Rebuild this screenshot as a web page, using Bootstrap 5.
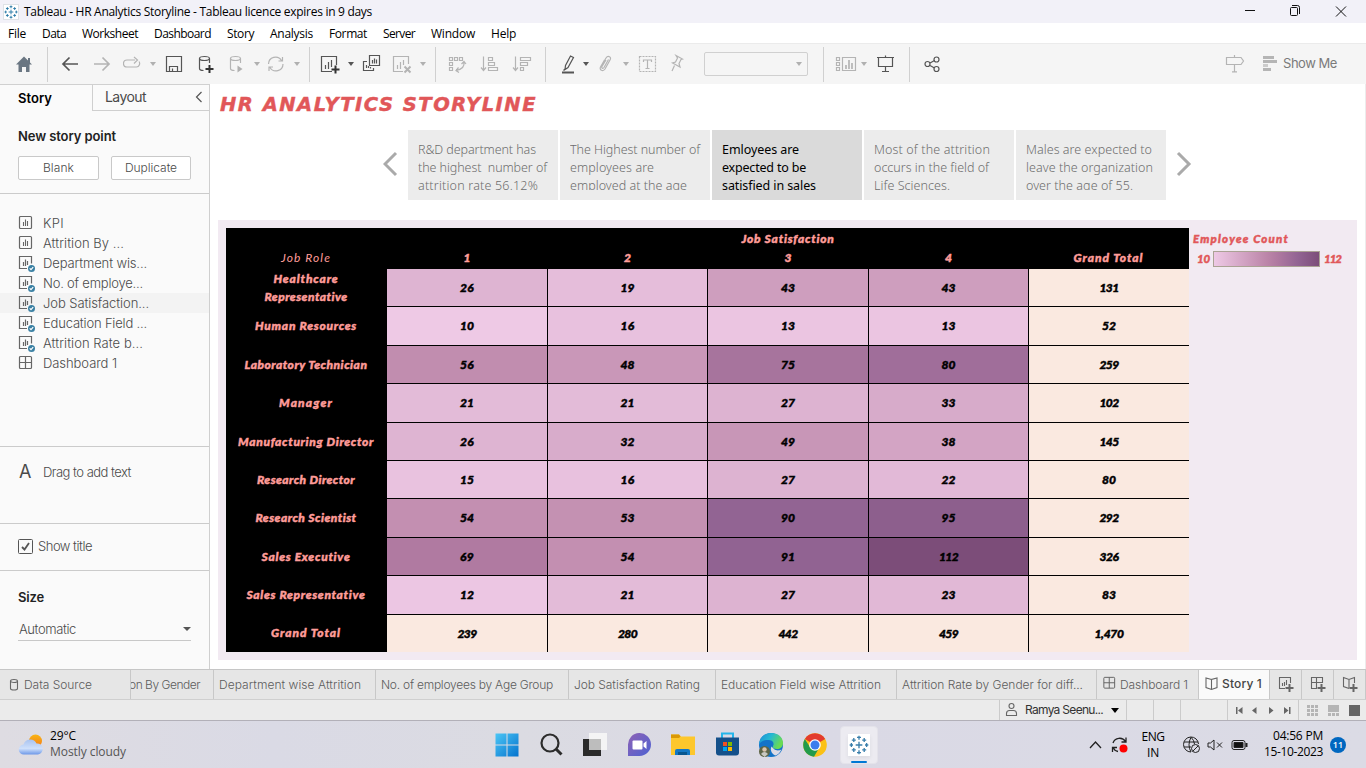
<!DOCTYPE html>
<html lang="en">
<head>
<meta charset="utf-8">
<title>Tableau - HR Analytics Storyline</title>
<link href="https://cdn.jsdelivr.net/npm/bootstrap@5.3.0/dist/css/bootstrap.min.css" rel="stylesheet">
<style>
  body{width:1366px;height:768px;overflow:hidden;font:13px/18px "Inter","Liberation Sans",sans-serif;font-weight:300;color:#4a4a4a;background:#fff}
  svg{display:block;flex:none}
  .segoe{font-family:"Open Sans","Noto Sans",sans-serif;font-weight:400;font-size:12px;color:#000}
  [data-w]{display:inline-block;white-space:pre}
  .titlebar{height:23px;background:#f2f1f8}
  .menubar{height:20px;padding:1px 0 0 8px;gap:16px;background:#fff}
  .menubar span{line-height:20px}
  .toolbar{height:41px;padding-left:15px;background:#f5f5f5;border-top:1px solid #ebebeb;display:grid;align-items:center;
    grid-template-columns:32px 14px 32px 30px 27px 15px 32px 31px 26px 12px 28px 15px 11px 28px 14px 30px 28px 15px 13px 32px 32px 33px 16px 22px 15px 25px 15px 31px 35px 119px 12px 26px 15px 33px 15px 301px 37px auto}
  .toolbar svg,.strk{fill:none;stroke:#b4b4b4;stroke-width:1.2}
  .toolbar svg.on{stroke:#555}
  .vline{width:1px;height:35px;background:#d0d0d0}
  .caret{width:0;border:3px solid transparent;border-top:4px solid #b0b0b0;border-bottom:0}
  .caret.on{border-top-color:#555}
  .pick{width:104px;height:24px;border:1px solid #d0d0d0;border-radius:2px;padding-right:5px}
  .showme{font-size:13px;font-weight:400;color:#7a7a7a;padding-bottom:3px}
  .side{width:210px;background:#fafafa;border-right:1px solid #cfcfcf;border-top:1px solid #d0d0d0}
  .side .sect{border-bottom:1px solid #cbcbcb;padding-left:18px}
  .laytab{width:117px;height:26px;border-left:1px solid #cfcfcf;border-bottom:1px solid #cfcfcf;padding:0 6px 1px 12px;font-size:14px;font-weight:400}
  .hd{font-weight:600;color:#222;font-size:13px}
  .sbtn{height:24px;border:1px solid #c9c9c9;border-radius:2px;background:#fff;line-height:21px;font-size:12px}
  .srow{height:20px;padding-left:18px;gap:8px}
  .srow.hot{background:#f3f3f3}
  .stitle{height:46px;padding:8px 0 0 10px;line-height:25px;font-family:"DejaVu Sans",sans-serif;font-weight:700;font-style:italic;font-size:19.500px;color:#e15759}
  .script{font-family:"Lato","Open Sans",sans-serif;font-style:italic;font-weight:900}
  .bold{-webkit-text-stroke:.45px currentColor}
  .canvas{border-right:1px solid #ececec}
  .points{height:70px;padding-left:173px;gap:2px}
  .point{width:150px;height:70px;background:#ececec;padding:11px 0 0 10px;color:#6c6c6c;font-family:"Noto Sans","Open Sans",sans-serif;font-size:12.500px;font-weight:300}
  .point>div{height:49px;overflow:hidden}
  .point.cur{background:#dadada;color:#000;font-weight:400}
  .dash{margin:20px 8px 0 8px;height:440px;background:#f2eaf2;padding:8px}
  .heat{display:grid;background:#000;width:963px;color:#ff9d9a;font-size:12px;
    grid-template-columns:161px 161px 160px 161px 160px 160px;
    grid-template-rows:20px 21px 38px 39px 38px 39px 38px 38px 39px 38px 39px 37px}
  .heat>div{display:flex;align-items:center;justify-content:center;text-align:center;padding:0 1px 1px 0}
  .heat .val{color:#000;border-right:1px solid #000;border-bottom:1px solid #000;padding:0}
  .heat .val.end{border-right:0}.heat .val.bot{border-bottom:0}
  .total{background:#fae9e0}
  .heat .span5{grid-column:2/7;padding:1px 0 0}
  .legend{color:#e15759;font-size:11.500px;padding:2px 0 0 4px}
  .ramp{width:107px;height:16px;border:1px solid #aaa294;margin:0 4px 0 3px;background:linear-gradient(90deg,#eec9e5,#bc86a9 50%,#b07aa1 60%,#926493 80%,#7c4d79)}
  .sheets{height:31px;border-top:1px solid #c6c6c6;border-bottom:1px solid #cfcfcf;background:#e6e6e6;color:#5c5c5c;font-size:12px;
    display:grid;grid-template-columns:131px 83px 162px 193px 147px 181px 200px 102px 71px 32px 32px 32px}
  .sheets>div{border-right:1px solid #c8c8c8;display:flex;align-items:center;padding-left:5px;overflow:hidden;white-space:nowrap}
  .sheets svg,.status svg{stroke:#666;fill:none;stroke-width:1.1}
  .status{height:21px;background:#ebebeb;border-bottom:1px solid #b2b0b8;padding-left:999px;display:grid;grid-template-columns:127px 27px 27px 47px 71px 67px}
  .status>div{border-left:1px solid #cbcbcb;display:flex;align-items:center}
  .taskbar{height:47px;background:linear-gradient(90deg,#dedce2,#dadae5 20%,#dbdbe2 38%,#dad9e5 60%,#dbdbe5)}
  .tbi{width:44px;height:47px}
  .active-app{width:38px;height:38px;border-radius:4px;background:#ecebf1;border:1px solid #e4e3ea}
  .badge11{width:16px;height:16px;border-radius:50%;background:#0067c0;color:#fff;font:600 9px/16px "Open Sans",sans-serif}
</style>
</head>
<body class="d-flex flex-column">
<svg width="0" height="0" class="position-absolute">
  <symbol id="tab" viewBox="0 0 15 15"><path d="M7.500 5v5M5 7.500h5M3.600 2.300v3M2.100 3.800h3M11.400 2.300v3M9.900 3.800h3M3.600 9.700v3M2.100 11.200h3M11.400 9.700v3M9.900 11.200h3M7.500.500v3M6 1.800h3M7.500 11.500v3M6 13.200h3M1.800 6v3M.500 7.500h2.500M13.200 6v3M12 7.500h2.500" stroke-width="1" fill="none"/></symbol>
  <symbol id="sheet" viewBox="0 0 17 17"><rect x="1.500" y="1.500" width="12" height="12" rx="1"/><path d="M5.500 7v4M7.500 4.500v6.500M9.500 6v5" stroke-width="1.100"/></symbol>
  <symbol id="done" viewBox="0 0 17 17"><path d="M9 13.500H1.500v-12h12v7"/><path d="M5.500 7v4M7.500 4.500v6.500M9.500 6v4"/><circle cx="13.500" cy="13.500" r="3.500" fill="#3a80a3" stroke="none"/><path d="M11.700 13.400l1.300 1.300 2.200-2.500" stroke="#fff"/></symbol>
  <symbol id="grid4" viewBox="0 0 17 17"><rect x="1.500" y="1.500" width="12" height="12" rx="1"/><path d="M7.500 1.500v12M1.500 7.500h12"/></symbol>
  <symbol id="book" viewBox="0 0 17 17"><path d="M7.500 3.500L2 2v9.500l5.500 2 5.500-2V2l-5.500 1.500v10"/></symbol>
</svg>

<header class="titlebar d-flex align-items-center segoe">
  <svg width="16" height="16" class="bg-white border" style="margin-left:3px;stroke:#2878a6"><use href="#tab"/></svg>
  <span style="margin-left:5px" data-w="348">Tableau - HR Analytics Storyline - Tableau licence expires in 9 days</span>
  <svg class="ms-auto" width="122" height="18" fill="none" stroke="#111" style="margin-top:-2px"><path d="M1 8.500h10"/><rect x="46.500" y="5.500" width="7" height="8" rx="1"/><path d="M48 3.500h5.500q2 0 2 2V12M92 4.500l10 10M102 4.500l-10 10"/></svg>
</header>
<nav class="menubar segoe d-flex">
  <span data-w="18">File</span><span data-w="24">Data</span><span data-w="56">Worksheet</span><span data-w="57">Dashboard</span><span data-w="27">Story</span><span data-w="43">Analysis</span><span data-w="38">Format</span><span data-w="32">Server</span><span data-w="44">Window</span><span data-w="25">Help</span>
</nav>

<div class="toolbar">
  <svg width="18" height="20"><path d="M9 2.500L1 10.500h2.500V18H7v-5h4v5h3.500v-7.500H17L15 8.500V4h-2v2.500z" fill="#6a7682" stroke="none"/></svg>
  <i class="vline"></i>
  <svg class="on" width="18" height="20"><path d="M17 10H2M8.500 3.500L2 10l6.500 6.500" stroke-width="1.700"/></svg>
  <svg width="18" height="20"><path d="M1 10h15M9.500 3.500L16 10l-6.500 6.500" stroke-width="1.700"/></svg>
  <svg width="19" height="20"><path d="M12 6H4a3.500 3.500 0 0 0 0 7h9.500a3.500 3.500 0 0 0 2.500-5.500M11 3l3.500 3L11 9.500"/></svg>
  <i class="caret"></i>
  <svg class="on" width="18" height="20"><path d="M1.500 2.500h15v15h-15zM4.500 17v-4.500h8V17M7.500 17v-2.500"/></svg>
  <svg class="on" width="18" height="20"><ellipse cx="7.500" cy="4.500" rx="5" ry="2"/><path d="M2.500 4.500v10q0 2 4 2M12.500 4.500V9"/><path d="M12.500 11v8M8.500 15h8" stroke="#333" stroke-width="2"/></svg>
  <svg width="18" height="20"><ellipse cx="7.500" cy="4.500" rx="5" ry="2"/><path d="M2.500 4.500v10q0 2 4 2M12.500 4.500V9"/><path d="M9.500 11.500v7l5-3.500z" fill="#b0b0b0" stroke="none"/></svg>
  <i class="caret"></i>
  <svg width="20" height="20"><path d="M2.500 10A7 7 0 0 1 15.500 6.500M17 10A7 7 0 0 1 4 13.500M16.500 3v4h-4M3 17v-4h4"/></svg>
  <i class="caret"></i>
  <i class="vline"></i>
  <svg class="on" width="22" height="20"><path d="M12 17.500H1.500v-15h15V11M5.500 11v4M8.500 8v7M11.500 6v7"/><path d="M15.500 11.500v8M11.500 15.500h8" stroke="#333" stroke-width="2"/></svg>
  <i class="caret on"></i>
  <svg class="on" width="20" height="20"><path d="M7.500 1.500h10v10h-10zM5 7.500H1.500v9h10V14M10.500 6v3.500M12.500 4.500v5M14.500 5.500v4M4.500 11v3M6.500 12v2M8.500 13v1.500"/></svg>
  <svg width="22" height="20"><path d="M11 17.500H1.500v-15h15V10M5.500 11v4M8.500 8v7M11.500 6v5"/><path d="M12.500 12.500l6 6M18.500 12.500l-6 6" stroke-width="2"/></svg>
  <i class="caret"></i>
  <i class="vline"></i>
  <svg width="20" height="20"><path d="M1.500 3.500h3v3h-3zM6.500 3.500h3v3h-3zM11.500 3.500h3v3h-3zM1.500 8.500h3v3h-3zM1.500 13.500h3v3h-3zM16 8q1 7-8 8.500M13.500 10L16 7.500l2 2.500M10.500 13.500L8 16.500l3 2"/></svg>
  <svg width="20" height="20"><path d="M3.500 2.500v14M1 13.500l2.500 3 2.500-3M8.500 3.500h4v3h-4zM8.500 8.500h6v3h-6zM8.500 13.500h9v3h-9z"/></svg>
  <svg width="20" height="20"><path d="M3.500 2.500v14M1 13.500l2.500 3 2.500-3M8.500 3.500h10v3h-10zM8.500 8.500h7v3h-7zM8.500 13.500h3v3h-3z"/></svg>
  <i class="vline"></i>
  <svg class="on" width="15" height="20"><path d="M9.500 2l3 1.500L7 13.500l-3 2 .5-4zM4 15L2.500 16.500"/><path d="M1 18.500h12" stroke-width="2"/></svg>
  <i class="caret on"></i>
  <svg width="16" height="20"><path d="M4 11l4-7c2-3 6-1 4 2l-5 9c-2 3-6 1-4.500-2L6.500 6M10.500 5.500l-4.500 8c-1 1.500-3 .5-2-1L8 6"/></svg>
  <i class="caret"></i>
  <svg width="20" height="20"><rect x="1.500" y="2.500" width="16" height="15" stroke-dasharray="2 1"/><path d="M5.500 8V6h8v2M9.500 6v8.500M7.500 14.500h4"/></svg>
  <svg width="18" height="20"><path d="M7 1.500l6.500 3.500-1.500.500-2 4 1 3.500-7.500-4 3-1 2-4zM5.500 11.500L3 17"/></svg>
  <div class="pick d-flex align-items-center justify-content-end"><i class="caret"></i></div>
  <i class="vline"></i>
  <svg width="22" height="20"><path d="M1.500 3.500h3v3h-3zM1.500 8.500h3v3h-3zM1.500 13.500h3v3h-3zM7.500 3.500h13v13h-13z"/><path d="M11 11v4M14 6v9M17 9v6" stroke-width="1.700"/></svg>
  <i class="caret"></i>
  <svg class="on" width="20" height="20"><path d="M1 3.500h17M2.500 3.500v9h14v-9M9.500 1.500v2M9.500 12.500v5M6 17.500h7"/></svg>
  <i class="vline"></i>
  <svg class="on" width="17" height="20"><circle cx="3.500" cy="10" r="2.500"/><circle cx="12.500" cy="5.500" r="2.500"/><circle cx="12.500" cy="15" r="2.500"/><path d="M6 9l4.500-2.500M6 11.500l4.500 2.500"/></svg>
  <svg width="20" height="20"><path d="M9.500 1v2M1.500 3.500H16l2.500 3.500-2.500 3.500H1.500zM9.500 10.500v7M7 17.800h5"/></svg>
  <div class="d-flex align-items-center"><svg width="17" height="20"><g stroke="none" fill="#b5b5b5"><path d="M1 2h11v3H1zM1 6h14v3H1z"/><path d="M1 10h5v3H1z" fill="#ccc"/><path d="M1 14h8v3H1z"/></g></svg><div class="showme ms-1"><span data-w="54">Show Me</span></div></div>
</div>

<main class="d-flex" style="height:585px">
  <aside class="side d-flex flex-column">
    <div class="sect p-0" style="height:109px">
      <div class="d-flex justify-content-between">
        <span class="hd text-black" style="padding:4px 0 0 18px"><span data-w="34">Story</span></span>
        <div class="laytab d-flex align-items-center justify-content-between"><span data-w="41">Layout</span><svg width="8" height="12" fill="none" stroke="#555" stroke-width="1.200"><path d="M6.500 1L1.500 6l5 5"/></svg></div>
      </div>
      <div class="hd" style="padding:16px 0 0 18px"><span data-w="98">New story point</span></div>
      <div class="d-flex" style="padding:11px 0 0 18px;gap:12px">
        <div class="sbtn text-center" style="width:81px"><span data-w="31">Blank</span></div>
        <div class="sbtn text-center" style="width:80px"><span data-w="52">Duplicate</span></div>
      </div>
    </div>
    <div class="sect px-0" style="height:253px;padding-top:19px" id="sheetlist"></div>
    <div class="sect d-flex" style="height:77px;padding-top:16px;gap:10px"><span style="font:400 18px/18px Inter;width:15px;padding-left:1px">A</span><span data-w="88">Drag to add text</span></div>
    <div class="sect d-flex align-items-center" style="height:47px;padding-bottom:2px"><svg width="15" height="15" fill="none" stroke="#555"><rect x=".5" y=".5" width="14" height="14" rx="1"/><path d="M4 8l2.500 2.500L11 4" stroke-width="1.800"/></svg><span style="margin-left:5px" data-w="54">Show title</span></div>
    <div style="padding:17px 0 0 18px">
      <div class="hd"><span data-w="26">Size</span></div>
      <div class="d-flex align-items-center justify-content-between" style="width:173px;height:25px;margin-top:10px;padding:1px 0 0 1px;border-bottom:1px solid #c8c8c8"><span data-w="57">Automatic</span><i class="caret on" style="border-width:4px 4px 0"></i></div>
    </div>
  </aside>
  <section class="canvas flex-grow-1">
    <div class="stitle bold"><span data-w="317">HR ANALYTICS STORYLINE</span></div>
    <div class="points d-flex align-items-center">
      <svg width="23" height="28" fill="none" stroke="#aaa" stroke-width="3"><path d="M13 2L2 13l11 11"/></svg>
      <div class="point"><div><span data-w="118">R&amp;D department has</span><br><span data-w="129">the highest  number of</span><br><span data-w="120">attrition rate 56.12%</span></div></div>
      <div class="point"><div><span data-w="130">The Highest number of</span><br><span data-w="84">employees are</span><br><span data-w="117">employed at the age</span></div></div>
      <div class="point cur"><div><span data-w="77">Emloyees are</span><br><span data-w="84">expected to be</span><br><span data-w="94">satisfied in sales</span></div></div>
      <div class="point"><div><span data-w="116">Most of the attrition</span><br><span data-w="115">occurs in the field of</span><br><span data-w="76">Life Sciences.</span></div></div>
      <div class="point"><div><span data-w="126">Males are expected to</span><br><span data-w="127">leave the organization</span><br><span data-w="107">over the age of 55.</span></div></div>
      <svg width="24" height="28" fill="none" stroke="#aaa" stroke-width="3" class="ms-1"><path d="M6 2l11 11L6 24"/></svg>
    </div>
    <div class="dash d-flex">
      <div class="heat script" id="heat"></div>
      <div class="legend script bold">
        <div><span data-w="96">Employee Count</span></div>
        <div class="d-flex align-items-center" style="padding:3px 0 0 4px;line-height:16px"><span data-w="13">10</span><i class="ramp"></i><span data-w="17">112</span></div>
      </div>
    </div>
  </section>
</main>

<div class="sheets">
  <div style="padding-left:9px"><svg width="11" height="14"><ellipse cx="5" cy="3" rx="3.500" ry="1.500"/><path d="M1.500 3v7.500q0 1.500 3.500 1.500t3.500-1.500V3"/></svg><span style="margin-left:4px" data-w="68">Data Source</span></div>
  <div style="padding-left:0"><span style="margin-left:-2px" data-w="71">on By Gender</span></div>
  <div><span data-w="142">Department wise Attrition</span></div>
  <div><span data-w="172">No. of employees by Age Group</span></div>
  <div><span data-w="126">Job Satisfaction Rating</span></div>
  <div><span data-w="160">Education Field wise Attrition</span></div>
  <div><span data-w="181">Attrition Rate by Gender for diff...</span></div>
  <div><svg width="17" height="17"><use href="#grid4" width="17" height="17" transform="translate(.5) scale(.9)"/></svg><span style="margin-left:1px" data-w="68">Dashboard 1</span></div>
  <div style="background:#fafafa;color:#444;font-weight:500"><svg width="17" height="17"><use href="#book"/></svg><span style="margin-left:1px;margin-top:-2px" data-w="40">Story 1</span></div>
  <div style="padding-left:7px"><svg width="20" height="20"><path d="M8 13.500H2.500v-11h11V8M5.500 8v3M7.500 7v4M9.500 5v5"/><path d="M12.500 9v8M8.500 13h8" stroke-width="2"/></svg></div>
  <div style="padding-left:7px"><svg width="20" height="20"><path d="M8 13.500H2.500v-11h11V8M7.500 2.500v11M2.500 7.500h11"/><path d="M12.500 9v8M8.500 13h8" stroke-width="2"/></svg></div>
  <div style="padding-left:7px"><svg width="20" height="20"><path d="M8 13.500l-5.500-2v-9l5.500 2 5.500-2V8M8 4.500v9"/><path d="M12.500 9v8M8.500 13h8" stroke-width="2"/></svg></div>
</div>
<div class="status">
  <div style="padding-left:5px"><svg width="14" height="16"><circle cx="6.500" cy="4" r="2.500"/><path d="M1.500 13.500v-2q0-3 3-3h4q3 0 3 3v2z"/></svg><span style="margin-left:6px;color:#333;font-size:12px;font-weight:400" data-w="78">Ramya Seenu...</span><i class="caret" style="margin-left:8px;border-width:5px 4px 0;border-top-color:#000"></i></div>
  <div></div><div></div><div></div>
  <div><svg width="70" height="14"><g fill="#666" stroke="none"><path d="M8 4h1.500v7H8zM14.500 4v7L10 7.500zM28.500 4v7L24 7.500zM41 4v7l4.500-3.500zM56 4v7l4.500-3.500zM61 4h1.500v7H61z"/></g></svg></div>
  <div><svg width="66" height="14"><g fill="#b5b5b5" stroke="none"><path d="M8 2h3v3H8zM12 2h3v3h-3zM16 2h3v3h-3zM8 6h3v3H8zM12 6h3v3h-3zM16 6h3v3h-3zM8 10h3v3H8zM12 10h3v3h-3zM16 10h3v3h-3zM29 2h11v7H29zM29 10h3v3h-3zM33 10h3v3h-3zM37 10h3v3h-3z"/><path d="M50 2h11v11H50z" fill="#666"/></g></svg></div>
</div>

<footer class="taskbar d-flex align-items-center segoe">
  <svg width="28" height="24" style="margin-left:17px"><defs><linearGradient id="cl" x2="0" y2="1"><stop stop-color="#a9c3f0"/><stop offset=".6" stop-color="#cfe0fb"/><stop offset="1" stop-color="#6d98e8"/></linearGradient><linearGradient id="sun" x2="0" y2="1"><stop stop-color="#f9b513"/><stop offset="1" stop-color="#f47a1c"/></linearGradient></defs><circle cx="18.500" cy="8" r="6.500" fill="url(#sun)"/><path d="M7 21.500a5 5 0 0 1-.5-10 7 7 0 0 1 13-1 5.500 5.500 0 0 1 1.500 11z" fill="url(#cl)"/></svg>
  <div style="margin-left:5px;line-height:16px;width:435px;flex:none;margin-top:-2px"><div><span data-w="26">29°C</span></div><div style="color:#555"><span data-w="76">Mostly cloudy</span></div></div>
  <div class="d-flex flex-shrink-0">
    <div class="tbi d-flex align-items-center justify-content-center"><svg width="24" height="24"><defs><linearGradient id="wn" x2="1" y2="1"><stop stop-color="#4cc6f5"/><stop offset="1" stop-color="#0473ce"/></linearGradient></defs><path d="M.5.5h11v11H.5zM12.500.5h11v11h-11zM.5 12.500h11v11H.5zM12.500 12.500h11v11h-11z" fill="url(#wn)"/></svg></div>
    <div class="tbi d-flex align-items-center justify-content-center"><svg width="24" height="24" fill="none" stroke="#2c2c2c" stroke-width="2.200"><circle cx="11" cy="10" r="8.500"/><path d="M17 16l5.500 5.500" stroke-width="3"/></svg></div>
    <div class="tbi d-flex align-items-center justify-content-center"><svg width="26" height="24"><path d="M1 6h18v17H1z" fill="#2b2b2b"/><path d="M7 0h18v17H7z" fill="#f6f6f6" opacity=".9"/><path d="M7 6h12v11H7z" fill="#bdbdbd"/></svg></div>
    <div class="tbi d-flex align-items-center justify-content-center"><svg width="24" height="24"><defs><linearGradient id="tm" x2="1" y2="1"><stop stop-color="#8f62b5"/><stop offset="1" stop-color="#4c61d2"/></linearGradient></defs><path d="M1 23V12A11.500 11.500 0 1 1 12.500 23z" fill="url(#tm)"/><rect x="5.500" y="7.500" width="10" height="9" rx="1" fill="#fff"/><path d="M16.500 10.500l3-2.500v8l-3-2.500z" fill="#fff"/></svg></div>
    <div class="tbi d-flex align-items-center justify-content-center"><svg width="26" height="24"><path d="M1 1.500h8l2 2h14V22H1z" fill="#fdc72c"/><path d="M1 1.500h8l1.500 2L9 5H1z" fill="#da9805"/><path d="M5 22v-4q0-2 2-2h11q2 0 2 2v4z" fill="#1377c5"/><path d="M8 19h9v3H8z" fill="#08568f"/></svg></div>
    <div class="tbi d-flex align-items-center justify-content-center"><svg width="24" height="25"><path d="M7 6V1.500h11V6" fill="none" stroke="#23b5ea" stroke-width="2"/><path d="M1 5.500h23v15q0 3-3 3H4q-3 0-3-3z" fill="#14508a"/><path d="M8 10h4v4H8z" fill="#f25022"/><path d="M13 10h4v4h-4z" fill="#7fba00"/><path d="M8 15h4v4H8z" fill="#00a4ef"/><path d="M13 15h4v4h-4z" fill="#ffb900"/></svg></div>
    <div class="tbi d-flex align-items-center justify-content-center"><svg width="26" height="26"><defs><linearGradient id="eg" x2="1" y2=".4"><stop stop-color="#1c8bd8"/><stop offset=".5" stop-color="#25b9d2"/><stop offset="1" stop-color="#6adb52"/></linearGradient></defs><circle cx="13" cy="13" r="12" fill="#1473c8"/><path d="M1 13C1 5 7 1 13 1c7 0 12 4 12 10 0 4-3 6-6 6-4 0-5-2-3.500-4C16 9 13 8 10 8c-5 0-8 2-9 5z" fill="url(#eg)"/><path d="M16 17c2 2 6 1.500 7.500.500-2 4-4 5-6 6-3-1-6-5-4-9z" fill="#dcdbe5"/><circle cx="6.500" cy="19.500" r="5.500" fill="#5e6547"/><circle cx="6.500" cy="17.500" r="2.200" fill="#d9c3ad"/><path d="M3 22q3.500-4 7 0l-3.500 3z" fill="#c9c8c0"/></svg></div>
    <div class="tbi d-flex align-items-center justify-content-center"><svg width="24" height="24"><circle cx="12" cy="12" r="11.800" fill="#fbc116"/><path d="M12 12L1.800 6A11.800 11.800 0 0 1 22.200 6z" fill="#e33b2e"/><path d="M12 12h0l-5 2L1.800 6A11.800 11.800 0 0 0 11 23.700l5.500-9.500z" fill="#229b4b"/><circle cx="12" cy="12" r="5.800" fill="#fff"/><circle cx="12" cy="12" r="4.500" fill="#3b7ded"/></svg></div>
    <div class="tbi d-flex align-items-center justify-content-center"><div class="active-app d-flex flex-column align-items-center"><div class="bg-white shadow-sm" style="margin-top:7px;padding:1px"><svg width="20" height="20" style="stroke:#3a7fab"><use href="#tab"/></svg></div><i class="rounded" style="width:16px;height:3px;background:#0078d4;margin-top:5px"></i></div></div>
  </div>
  <svg width="40" height="20" fill="none" stroke="#222" stroke-width="1.300" style="margin-left:208px"><path d="M1 13l5.500-6L12 13"/><path d="M24 8a7 7 0 0 1 12.500-1.500M37 2.500V7h-4.500M29 16.500a7 7 0 0 1-5-4M23.500 17v-4.500H28"/><circle cx="34.500" cy="13.500" r="4" fill="#f00" stroke="none"/></svg>
  <div class="text-center" style="width:32px;margin-left:8px;line-height:16px"><span data-w="23">ENG</span><br><span data-w="12">IN</span></div>
  <svg width="66" height="18" fill="none" stroke="#222" style="margin-left:14px"><path d="M8 16A7.500 7.500 0 1 1 15.500 8M8 16q-4-7 0-14.800Q11 4 11.500 8M1 6h14M1 11h7"/><circle cx="12.500" cy="12.500" r="4"/><path d="M10 15l5-5M25 7v4h2.500l3.500 3V4l-3.500 3zM34 6.500l5 5M39 6.500l-5 5"/><rect x="49" y="4.500" width="13" height="9" rx="2"/><path d="M51 6.500h9v5h-9z" fill="#111"/><path d="M63.500 7v4" stroke-width="2"/></svg>
  <div class="text-end" style="width:74px;line-height:16px;margin-top:-1px"><span data-w="50">04:56 PM</span><br><span data-w="59">15-10-2023</span></div>
  <div class="badge11 text-center" style="margin-left:7px">11</div>
</footer>

<script src="https://cdn.jsdelivr.net/npm/bootstrap@5.3.0/dist/js/bootstrap.bundle.min.js"></script>
<script>
  // Sheet list: name, text width, icon
  const list = [["KPI",21,"sheet"],["Attrition By ...",81,"sheet"],["Department wis...",104,"done"],["No. of employe...",100,"done"],["Job Satisfaction...",106,"done"],["Education Field ...",104,"done"],["Attrition Rate b...",100,"done"],["Dashboard 1",74,"grid4"]];
  document.getElementById("sheetlist").innerHTML = list.map((r,i) =>
    `<div class="srow d-flex align-items-center ${i==4?"hot":""}"><svg class="strk" style="stroke:#666" width="17" height="17"><use href="#${r[2]}"/></svg><span data-w="${r[1]}">${r[0]}</span></div>`).join("");

  // Heat map colours follow the employee count
  const stops = [[10,238,201,229],[61,188,134,169],[69,176,122,161],[90,146,100,147],[112,124,77,121]];
  function tint(v){
    let k = 1; while (k < stops.length-1 && v > stops[k][0]) k++;
    const a = stops[k-1], b = stops[k], t = (v-a[0])/(b[0]-a[0]);
    return "rgb(" + [1,2,3].map(n => Math.round(a[n]+(b[n]-a[n])*t)) + ")";
  }
  const rows = [
    [[["Healthcare",65],["Representative",83]],26,19,43,43,131],
    [[["Human Resources",102]],10,16,13,13,52],
    [[["Laboratory Technician",123]],56,48,75,80,259],
    [[["Manager",54]],21,21,27,33,102],
    [[["Manufacturing Director",136]],26,32,49,38,145],
    [[["Research Director",98]],15,16,27,22,80],
    [[["Research Scientist",101]],54,53,90,95,292],
    [[["Sales Executive",89]],69,54,91,112,326],
    [[["Sales Representative",119]],12,21,27,23,83],
    [[["Grand Total",70]],239,280,442,459,"1,470"]];
  let h = `<div></div><div class="span5"><span class="bold" data-w="93">Job Satisfaction</span></div><div><span class="fw-normal" data-w="50">Job Role</span></div>`
    + [1,2,3,4].map(n => `<div class="bold">${n}</div>`).join("") + `<div><span class="bold" data-w="70">Grand Total</span></div>`;
  rows.forEach((r,i) => {
    h += `<div class="bold"><div>${r[0].map(l => `<span data-w="${l[1]}">${l[0]}</span>`).join("<br>")}</div></div>`;
    r.slice(1).forEach((v,j) => {
      const tot = j==4 || i==9, w = {2:14,3:19,5:29}[String(v).length];
      h += `<div class="val bold ${tot?"total":""} ${j==4?"end":""} ${i==9?"bot":""}" ${tot?"":`style="background:${tint(v)}"`}><span data-w="${w}">${v}</span></div>`;
    });
  });
  document.getElementById("heat").innerHTML = h;

  // Tracking: spread each label over its intended width
  document.querySelectorAll("[data-w]").forEach(e => {
    const d = +e.dataset.w - e.getBoundingClientRect().width;
    e.style.letterSpacing = (d / e.textContent.length).toFixed(3) + "px";
  });
</script>
</body>
</html>
